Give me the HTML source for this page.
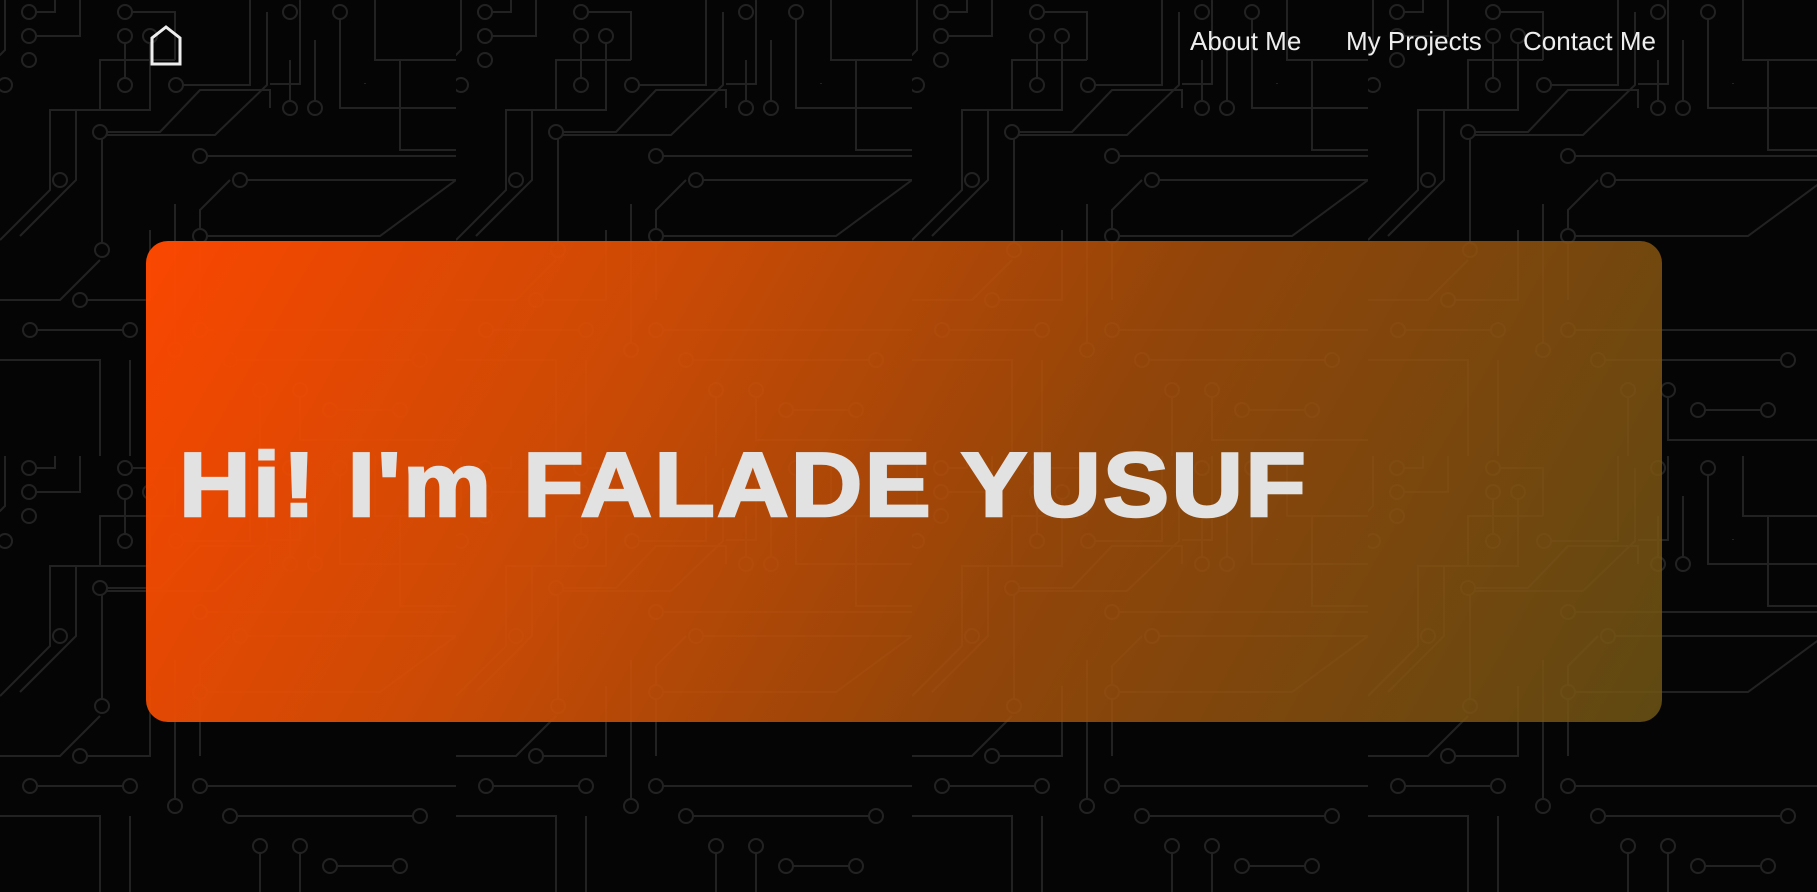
<!DOCTYPE html>
<html><head><meta charset="utf-8"><style>
html,body{margin:0;padding:0;width:1817px;height:892px;overflow:hidden;background:#050505;font-family:"Liberation Sans",sans-serif}
#bg{position:absolute;left:0;top:0}
.nav{position:absolute;top:26px;color:#eee;font-size:26px;white-space:nowrap}
.card{position:absolute;left:146px;top:241px;width:1516px;height:481px;border-radius:22px;
background:linear-gradient(120deg,rgba(255,72,0,0.98) 0%,rgba(220,80,5,0.92) 30%,rgba(170,80,10,0.85) 60%,rgba(110,85,20,0.85) 100%);}
h1{position:absolute;left:179px;top:431px;margin:0;font-size:91px;font-weight:bold;color:#e2e2e2;-webkit-text-stroke:2.5px #e2e2e2;letter-spacing:2px;transform:scaleX(1.09);transform-origin:left top;white-space:nowrap;line-height:110px}
</style></head><body>
<svg id="bg" width="1817" height="892">
<defs><pattern id="p" width="456" height="456" patternUnits="userSpaceOnUse">
<g fill="none" stroke="#222" stroke-width="2">
<path d="M5 0V50L-5 60M29 12H55V0M125 12H175V60M175 60H100V110H50V190L0 240"/>
<path d="M29 36H80V0M125 36V85M150 36V110H76V180L20 236M176 85H250V0M267 12V85L215 135H102V250M270 84H300V0"/>
<path d="M290 108V60M315 108V40M340 12V108H456M375 0V60H456M365 83V84M400 60V150H456"/>
<path d="M100 132H160L200 90H270V108M200 156H456M240 180H456L380 236H200M230 180L200 210V300M175 204V350M150 230V300H80"/>
<path d="M0 300H60L100 260M30 330H130M0 360H100V456M130 360V456M200 330H456M230 360H420M260 390V456M300 390V440H456M330 410H400"/>
</g>
<g fill="#050505" stroke="#222" stroke-width="2">
<circle cx="29" cy="12" r="7"/><circle cx="125" cy="12" r="7"/><circle cx="29" cy="36" r="7"/><circle cx="125" cy="36" r="7"/><circle cx="150" cy="36" r="7"/><circle cx="29" cy="60" r="7"/><circle cx="5" cy="85" r="7"/><circle cx="125" cy="85" r="7"/><circle cx="176" cy="85" r="7"/><circle cx="290" cy="108" r="7"/><circle cx="315" cy="108" r="7"/><circle cx="290" cy="12" r="7"/><circle cx="340" cy="12" r="7"/><circle cx="100" cy="132" r="7"/><circle cx="102" cy="250" r="7"/><circle cx="200" cy="156" r="7"/><circle cx="240" cy="180" r="7"/><circle cx="200" cy="236" r="7"/><circle cx="175" cy="350" r="7"/><circle cx="80" cy="300" r="7"/><circle cx="30" cy="330" r="7"/><circle cx="130" cy="330" r="7"/><circle cx="200" cy="330" r="7"/><circle cx="230" cy="360" r="7"/><circle cx="420" cy="360" r="7"/><circle cx="260" cy="390" r="7"/><circle cx="300" cy="390" r="7"/><circle cx="330" cy="410" r="7"/><circle cx="400" cy="410" r="7"/><circle cx="60" cy="180" r="7"/>
</g></pattern></defs>
<rect width="1817" height="892" fill="url(#p)"/>
</svg>
<svg style="position:absolute;left:148px;top:24px" width="38" height="44"><path d="M4 40V14L18 3L32 14V40Z" fill="none" stroke="#eee" stroke-width="3"/></svg>
<div class="nav" style="left:1190px">About Me</div>
<div class="nav" style="left:1346px">My Projects</div>
<div class="nav" style="left:1523px">Contact Me</div>
<div class="card"></div>
<h1>Hi! I'm FALADE YUSUF</h1>
</body></html>
